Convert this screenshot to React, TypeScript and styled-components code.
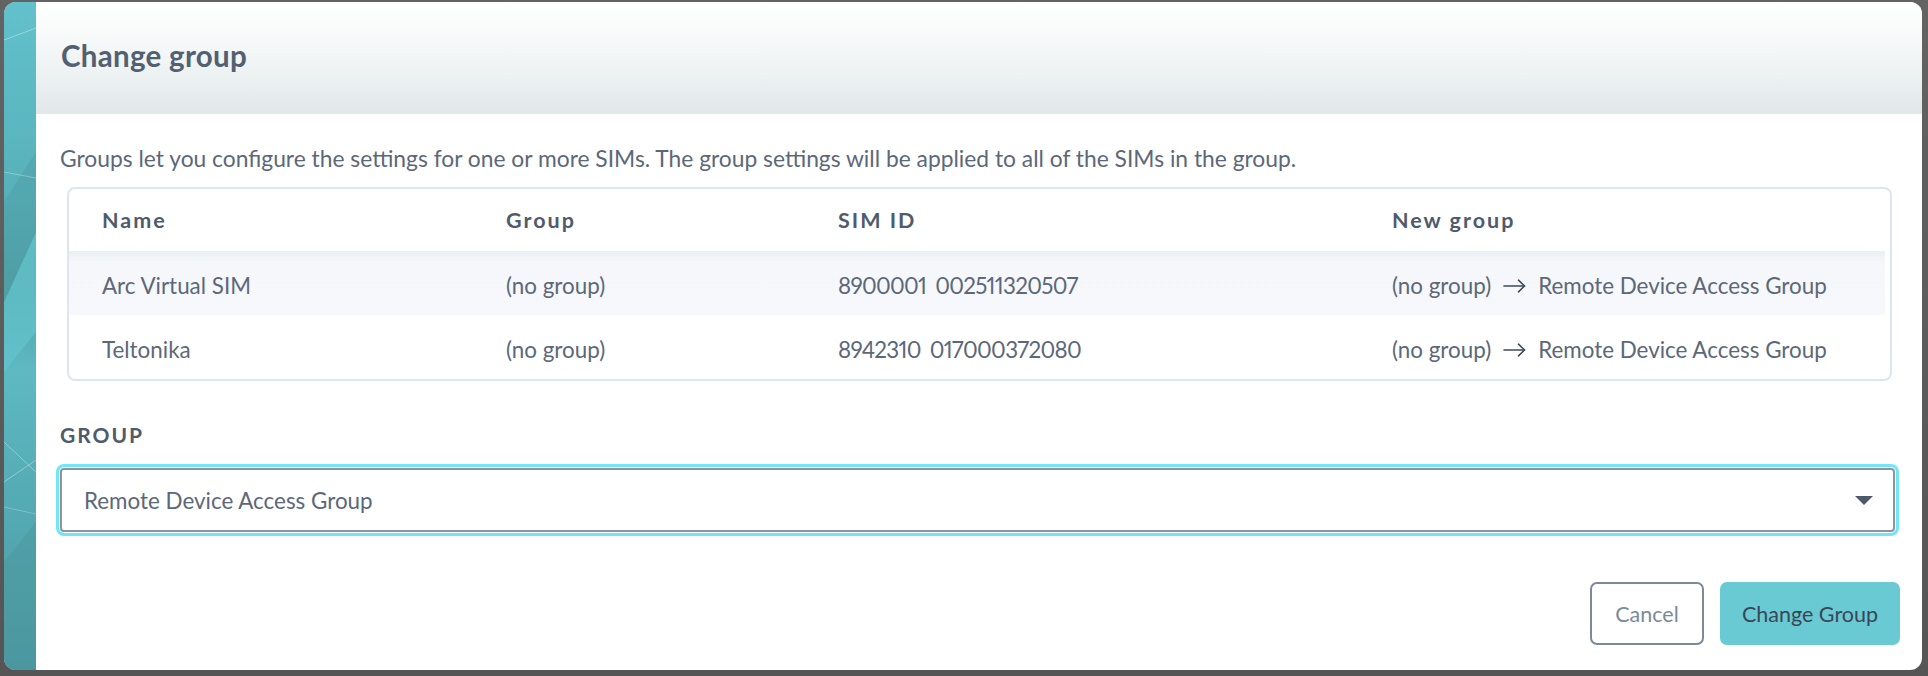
import React from 'react';
import styled, { createGlobalStyle } from 'styled-components';

const GlobalStyle = createGlobalStyle`
  html, body { margin: 0; padding: 0; background: #5c5c5c; }
  body { font-family: Lato, "Noto Sans", sans-serif; -webkit-font-smoothing: antialiased; }
  * { box-sizing: border-box; }
`;

const Page = styled.div`
  width: 1928px;
  height: 676px;
  padding: 2px 6px 6px 4px;
  display: flex;
  background: linear-gradient(to bottom, #636363, #555555);
`;

const Modal = styled.div`
  flex: 1;
  display: flex;
  border-radius: 12px;
  overflow: hidden;
  background: #ffffff;
`;

const Strip = styled.div`
  width: 32px;
  flex: none;
  display: flex;
  background: #57adb6;
  svg { width: 100%; height: 100%; display: block; }
`;

const Main = styled.div`
  flex: 1;
  display: flex;
  flex-direction: column;
  min-width: 0;
`;

const Header = styled.div`
  height: 112px;
  flex: none;
  display: flex;
  align-items: center;
  padding: 0 24px 5px 25px;
  background: linear-gradient(to bottom, #ffffff 0%, #f6f9f9 35%, #e1e8ea 100%);
`;

const Title = styled.h2`
  margin: 0;
  font-size: 29.5px;
  font-weight: 700;
  line-height: 34px;
  color: #526072;
  letter-spacing: 0.3px;
`;

const Body = styled.div`
  padding: 0 27px 0 24px;
  display: flex;
  flex-direction: column;
`;

const Description = styled.p`
  margin: 30px 0 0 0;
  font-size: 22.8px;
  line-height: 28px;
  color: #5c6879;
  white-space: nowrap;
`;

const Table = styled.div`
  margin: 15px 3px 0 7px;
  border: 2px solid #dde5ee;
  border-radius: 8px;
  overflow: hidden;
  padding-right: 5px;
`;

const Row = styled.div<{ $head?: boolean; $shaded?: boolean; $h: number }>`
  display: grid;
  grid-template-columns: 404px 332px 554px 1fr;
  align-items: center;
  height: ${p => p.$h}px;
  padding: ${p => (p.$head ? '0' : '5px')} 0 0 33px;
  background: ${p => (p.$shaded ? 'linear-gradient(to bottom, #eaeef3 0px, #f5f7fa 12px, #f6f8fb 100%)' : '#ffffff')};
  color: ${p => (p.$head ? '#4f5b6c' : '#5c6879')};
  font-size: ${p => (p.$head ? '21.5px' : '22.4px')};
  font-weight: ${p => (p.$head ? 700 : 400)};
  letter-spacing: ${p => (p.$head ? '2px' : '0')};
  line-height: 28px;
  white-space: nowrap;
`;

const SimId = styled.span`
  display: inline-flex;
  gap: 9px;
  font-variant-numeric: proportional-nums;
  letter-spacing: -0.7px;
`;

const Change = styled.span`
  display: inline-flex;
  align-items: center;
  gap: 12px;
  svg { color: #3e4a5a; flex: none; }
`;

const Label = styled.div`
  margin: 42px 0 0 0;
  font-size: 21px;
  line-height: 24px;
  font-weight: 700;
  letter-spacing: 2px;
  color: #4f5b6c;
`;

const Select = styled.div`
  margin-top: 21px;
  height: 64px;
  border: 2px solid #8b95a2;
  border-radius: 4px;
  box-shadow: 0 0 0 1px #ffffff, 0 0 0 4px #72e6f6;
  display: flex;
  align-items: center;
  justify-content: space-between;
  padding: 0 20px 0 22px;
  font-size: 22.4px;
  color: #5c6879;
`;

const Footer = styled.div`
  margin-top: auto;
  display: flex;
  justify-content: flex-end;
  gap: 16px;
  padding: 0 22px 25px 0;
`;

const Button = styled.button<{ $primary?: boolean }>`
  height: 63px;
  padding: 0 20px;
  min-width: ${p => (p.$primary ? '180px' : '114px')};
  border-radius: 7px;
  font-family: inherit;
  font-size: 21.5px;
  border: 2px solid ${p => (p.$primary ? '#69cad4' : '#7c899a')};
  background: ${p => (p.$primary ? '#69cad4' : '#ffffff')};
  color: ${p => (p.$primary ? '#3a4656' : '#7c899a')};
  cursor: pointer;
`;

const rows = [
  { name: 'Arc Virtual SIM', group: '(no group)', a: '8900001', b: '002511320507' },
  { name: 'Teltonika', group: '(no group)', a: '8942310', b: '017000372080' },
];

const StripArt = () => (
  <svg viewBox="0 0 32 668" preserveAspectRatio="none">
    <defs>
      <linearGradient id="tg" x1="0" y1="0" x2="0" y2="1">
        <stop offset="0" stopColor="#62c1cb" />
        <stop offset="0.3" stopColor="#56b0b9" />
        <stop offset="0.42" stopColor="#4f9fa7" />
        <stop offset="0.55" stopColor="#5db9c2" />
        <stop offset="0.8" stopColor="#53a7b0" />
        <stop offset="1" stopColor="#4b969e" />
      </linearGradient>
    </defs>
    <rect x="0" y="0" width="32" height="668" fill="url(#tg)" />
    <polygon points="0,300 32,230 32,330 0,370" fill="#63c3cc" opacity="0.75" />
    <polygon points="0,200 32,150 32,230 0,300" fill="#4f9ea6" opacity="0.5" />
    <polygon points="0,560 32,520 32,668 0,668" fill="#4c979f" opacity="0.5" />
    <line x1="0" y1="38" x2="32" y2="26" stroke="#ffffff" strokeOpacity="0.35" strokeWidth="1" />
    <line x1="0" y1="170" x2="32" y2="176" stroke="#ffffff" strokeOpacity="0.3" strokeWidth="1" />
    <line x1="0" y1="440" x2="32" y2="470" stroke="#ffffff" strokeOpacity="0.35" strokeWidth="1" />
    <line x1="0" y1="480" x2="32" y2="458" stroke="#ffffff" strokeOpacity="0.35" strokeWidth="1" />
    <line x1="0" y1="505" x2="32" y2="512" stroke="#ffffff" strokeOpacity="0.25" strokeWidth="1" />
  </svg>
);

const Arrow = () => (
  <svg width="23" height="14" viewBox="0 0 23 14" fill="none" stroke="currentColor" strokeWidth="1.6" strokeLinecap="round" strokeLinejoin="round">
    <path d="M1 7h20.5" />
    <path d="M15.5 1.2 21.5 7l-6 5.8" />
  </svg>
);

const Caret = () => (
  <svg width="18" height="9" viewBox="0 0 18 9">
    <polygon points="0,0 18,0 9,9" fill="#4d5a6b" />
  </svg>
);

export default function App() {
  return (
    <>
      <GlobalStyle />
      <Page>
        <Modal>
          <Strip>
            <StripArt />
          </Strip>
          <Main>
            <Header>
              <Title>Change group</Title>
            </Header>
            <Body>
              <Description>
                Groups let you configure the settings for one or more SIMs. The group settings will be applied to all of the SIMs in the group.
              </Description>
              <Table>
                <Row $head $h={62}>
                  <span>Name</span>
                  <span>Group</span>
                  <span>SIM ID</span>
                  <span>New group</span>
                </Row>
                {rows.map((r, i) => (
                  <Row key={r.name} $shaded={i === 0} $h={64}>
                    <span>{r.name}</span>
                    <span>{r.group}</span>
                    <SimId>
                      <span>{r.a}</span>
                      <span>{r.b}</span>
                    </SimId>
                    <Change>
                      <span>(no group)</span>
                      <Arrow />
                      <span>Remote Device Access Group</span>
                    </Change>
                  </Row>
                ))}
              </Table>
              <Label>GROUP</Label>
              <Select>
                <span>Remote Device Access Group</span>
                <Caret />
              </Select>
            </Body>
            <Footer>
              <Button>Cancel</Button>
              <Button $primary>Change Group</Button>
            </Footer>
          </Main>
        </Modal>
      </Page>
    </>
  );
}
